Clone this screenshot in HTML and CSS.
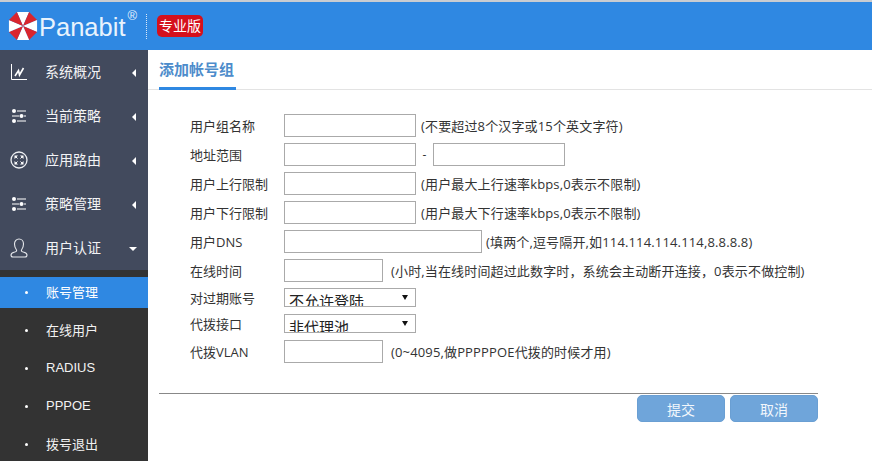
FILE: index.html
```html
<!DOCTYPE html>
<html lang="zh">
<head>
<meta charset="utf-8">
<title>添加账号组</title>
<link rel="stylesheet" href="styles.css">
</head>
<body>
<header class="topbar">
  <svg class="logo" viewBox="0 0 32 32" width="30" height="32">
    <path fill="#fff" d="M16 16 L9.500 1 H22.500 Z"/>
    <path fill="#d9252e" d="M16 16 L22.500 1 L31 9.500 Z"/>
    <path fill="#fff" d="M16 16 L31 9.500 V22.500 Z"/>
    <path fill="#d9252e" d="M16 16 L31 22.500 L22.500 31 Z"/>
    <path fill="#fff" d="M16 16 L22.500 31 H9.500 Z"/>
    <path fill="#d9252e" d="M16 16 L9.500 31 L1 22.500 Z"/>
    <path fill="#fff" d="M16 16 L1 22.500 V9.500 Z"/>
    <path fill="#d9252e" d="M16 16 L1 9.500 L9.500 1 Z"/>
  </svg>
  <span class="brand">Panabit<sup class="reg">®</sup></span>
  <span class="sep"></span>
  <span class="badge">专业版</span>
</header>
<div class="body">
  <nav class="sidebar">
    <ul class="menu">
      <li class="menu-item">
        <svg class="icon" viewBox="0 0 16 16" width="16" height="16"><path d="M.5 0V15.500H16" fill="none" stroke="#fff"/><path d="M4 12L7.500 6.500L8.500 11L12.500 4" fill="none" stroke="#fff" stroke-width="1.600"/></svg>
        <span class="menu-label">系统概况</span><span class="caret-left"></span>
      </li>
      <li class="menu-item">
        <svg class="icon icon-sm" viewBox="0 0 14 14" width="14" height="14"><g fill="#fff"><circle cx="2" cy="2" r="2"/><circle cx="9.500" cy="7" r="2"/><circle cx="2" cy="12" r="2"/><rect x="5" y="1.500" width="9" height="1"/><rect x="0" y="6.500" width="7" height="1"/><rect x="12" y="6.500" width="2" height="1"/><rect x="5" y="11.500" width="9" height="1"/></g></svg>
        <span class="menu-label">当前策略</span><span class="caret-left"></span>
      </li>
      <li class="menu-item">
        <svg class="icon icon-lg" viewBox="0 0 18 18" width="18" height="18"><circle cx="9" cy="9" r="8" fill="none" stroke="#eef0f3" stroke-width="1.300"/><g fill="#fff"><path d="M4.500 4.500H8L4.500 8Z"/><path d="M13.500 4.500H10L13.500 8Z"/><path d="M4.500 13.500H8L4.500 10Z"/><path d="M13.500 13.500H10L13.500 10Z"/></g><path d="M6 6L7.500 7.500M12 6L10.500 7.500M6 12L7.500 10.500M12 12L10.500 10.500" stroke="#fff"/></svg>
        <span class="menu-label">应用路由</span><span class="caret-left"></span>
      </li>
      <li class="menu-item">
        <svg class="icon icon-sm" viewBox="0 0 14 14" width="14" height="14"><g fill="#fff"><circle cx="2" cy="2" r="2"/><circle cx="9.500" cy="7" r="2"/><circle cx="2" cy="12" r="2"/><rect x="5" y="1.500" width="9" height="1"/><rect x="0" y="6.500" width="7" height="1"/><rect x="12" y="6.500" width="2" height="1"/><rect x="5" y="11.500" width="9" height="1"/></g></svg>
        <span class="menu-label">策略管理</span><span class="caret-left"></span>
      </li>
      <li class="menu-item">
        <svg class="icon icon-lg" viewBox="0 0 18 20" width="18" height="20"><path d="M6.500 12C5 10 4.500 8.500 4.500 6C4.500 3 6.500 1 9 1S13.500 3 13.500 6C13.500 8.500 13 10 11.500 12C11 13.200 12 13.700 14 14.300C16 14.900 17 15.800 17 17C17 18.200 16.200 19 15 19H3C1.800 19 1 18.200 1 17C1 15.800 2 14.900 4 14.300C6 13.700 7 13.200 6.500 12Z" fill="none" stroke="#e6e8ec" stroke-width="1.100"/></svg>
        <span class="menu-label">用户认证</span><span class="caret-down"></span>
      </li>
    </ul>
    <ul class="submenu">
      <li class="sub-item active"><span class="dot"></span>账号管理</li>
      <li class="sub-item"><span class="dot"></span>在线用户</li>
      <li class="sub-item"><span class="dot"></span>RADIUS</li>
      <li class="sub-item"><span class="dot"></span>PPPOE</li>
      <li class="sub-item"><span class="dot"></span>拨号退出</li>
    </ul>
  </nav>
  <main class="content">
    <div class="tabbar"><h1 class="tab">添加帐号组</h1></div>
    <form class="form">
      <div class="row"><label class="label">用户组名称</label><input class="input" type="text"><span class="hint">(不要超过8个汉字或15个英文字符)</span></div>
      <div class="row"><label class="label">地址范围</label><input class="input" type="text"><span class="dash">-</span><input class="input" type="text"></div>
      <div class="row"><label class="label">用户上行限制</label><input class="input" type="text"><span class="hint">(用户最大上行速率kbps,0表示不限制)</span></div>
      <div class="row"><label class="label">用户下行限制</label><input class="input" type="text"><span class="hint">(用户最大下行速率kbps,0表示不限制)</span></div>
      <div class="row"><label class="label">用户DNS</label><input class="input input-long" type="text"><span class="hint">(填两个,逗号隔开,如114.114.114.114,8.8.8.8)</span></div>
      <div class="row"><label class="label">在线时间</label><input class="input input-short" type="text"><span class="hint">(小时,当在线时间超过此数字时，系统会主动断开连接，0表示不做控制)</span></div>
      <div class="row row-select"><label class="label">对过期账号</label><div class="select-wrap"><select class="select"><option>不允许登陆</option></select><span class="select-arrow"></span></div></div>
      <div class="row row-select"><label class="label">代拨接口</label><div class="select-wrap"><select class="select"><option>非代理池</option></select><span class="select-arrow"></span></div></div>
      <div class="row"><label class="label">代拨VLAN</label><input class="input input-short" type="text"><span class="hint">(0~4095,做PPPPPOE代拨的时候才用)</span></div>
      <div class="actions">
        <button class="btn" type="button">提交</button>
        <button class="btn" type="button">取消</button>
      </div>
    </form>
  </main>
</div>
</body>
</html>
```
FILE: styles.css
```css
* { box-sizing: border-box; }
html, body { margin: 0; height: 100%; overflow: hidden; }
body {
  background: #fff;
  color: #333;
  font-family: "Open Sans", "Noto Sans CJK SC", "Liberation Sans", sans-serif;
  font-size: 13px;
  display: flex;
  flex-direction: column;
  border-top: 2px solid #c9ccd1;
}
ul { list-style: none; margin: 0; padding: 0; }

.topbar {
  height: 48px;
  flex: none;
  background: #2f88e2;
  display: flex;
  align-items: center;
  padding-left: 8px;
}
.logo { flex: none; }
.brand {
  font-family: "Liberation Sans", sans-serif;
  font-size: 25.500px;
  color: #e8f3fd;
  margin-left: 1px;
  width: 107px;
  white-space: nowrap;
  position: relative;
  top: 1px;
}
.reg { font-size: 13px; position: relative; top: -5px; vertical-align: top; margin-left: 2px; }
.sep { width: 0; height: 25px; border-left: 1px dotted #dbe9f8; }
.badge {
  margin-left: 10px;
  width: 46px;
  height: 22px;
  background: #d5101c;
  border-radius: 5px;
  color: #fff;
  font-family: "Noto Sans CJK SC", sans-serif;
  font-size: 14px;
  line-height: 21px;
  text-align: center;
}

.body { flex: 1; display: flex; min-height: 0; }
.sidebar { width: 148px; flex: none; background: #333; display: flex; flex-direction: column; }
.menu { background: #424a5d; }
.menu-item {
  height: 44px;
  display: flex;
  align-items: center;
  color: #f2f3f5;
  font-family: "Noto Sans CJK SC", sans-serif;
  font-size: 14px;
  padding-left: 11px;
  position: relative;
}
.icon { flex: none; }
.icon-sm { margin-left: 1px; }
.icon-lg { margin-left: -1px; }
.menu-label { position: absolute; left: 45px; margin-top: -2px; }
.caret-left {
  position: absolute; left: 132px; top: 19px;
  border-style: solid; border-width: 4px 4px 4px 0;
  border-color: transparent #fff transparent transparent;
}
.caret-down {
  position: absolute; left: 129px; top: 21px;
  border-style: solid; border-width: 4px 4px 0 4px;
  border-color: #fff transparent transparent transparent;
}
.submenu { padding-top: 7px; }
.sub-item {
  height: 31px;
  margin-bottom: 7px;
  padding-bottom: 3px;
  display: flex;
  align-items: center;
  color: #f2f2f2;
  font-family: "Liberation Sans", "Noto Sans CJK SC", sans-serif;
  font-size: 13px;
  padding-left: 25px;
}
.sub-item.active { background: #2f88e2; color: #fff; }
.dot { width: 3px; height: 3px; background: #fff; border-radius: 50%; margin-right: 18px; flex: none; position: relative; top: 1px; }

.content { flex: 1; min-width: 0; }
.tabbar { height: 40px; border-bottom: 1px solid #e3e3e3; padding-left: 11px; }
.tab {
  display: inline-block;
  margin: 0;
  height: 40px;
  width: 77px;
  font-family: "Noto Sans CJK SC", sans-serif;
  font-size: 15px;
  font-weight: 700;
  line-height: 37px;
  color: #4d8ccb;
  border-bottom: 3px solid #2f88e2;
  white-space: nowrap;
}
.form { padding: 24px 54px 0 11px; }
.row {
  display: flex;
  align-items: center;
  height: 23px;
  margin-bottom: 6px;
  white-space: nowrap;
}
.row-select { height: 19px; margin-bottom: 7px; }
.label { width: 94px; margin-left: 31px; flex: none; color: #333; }
.input {
  width: 132px;
  height: 23px;
  border: 1px solid #aaa;
  background: #fff;
  padding: 0 4px;
  flex: none;
}
.input-long { width: 198px; }
.input-short { width: 99px; }
.hint { margin-left: 5px; font-size: 13px; letter-spacing: .15px; color: #333; }
.input-long + .hint, .input-short + .hint { margin-left: 8px; }
.input-long + .hint { margin-left: 4px; }
.dash { width: 17px; text-align: center; font-size: 12px; }
.select-wrap { position: relative; width: 132px; height: 19px; }
.select {
  appearance: none;
  -webkit-appearance: none;
  display: block;
  width: 132px;
  height: 19px;
  border: 1px solid #aaa;
  border-radius: 0;
  background: #fff;
  color: #222;
  font-family: "Noto Sans CJK SC", sans-serif;
  font-size: 15px;
  padding: 3px 0 0 4px;
  line-height: 18px;
}
.select-arrow {
  position: absolute; right: 8px; top: 7px;
  border-style: solid; border-width: 5px 3.500px 0 3.500px;
  border-color: #111 transparent transparent transparent;
  pointer-events: none;
}
.actions {
  margin-top: 30px;
  border-top: 1px solid #888;
  padding-top: 1px;
  display: flex;
  justify-content: flex-end;
  gap: 5px;
}
.btn {
  width: 88px;
  height: 27px;
  background: #6fa5da;
  border: 1px solid #6a9fd3;
  border-radius: 5px;
  color: #f2f7fc;
  font-family: "Noto Sans CJK SC", sans-serif;
  font-size: 14px;
  padding: 0;
}
```
